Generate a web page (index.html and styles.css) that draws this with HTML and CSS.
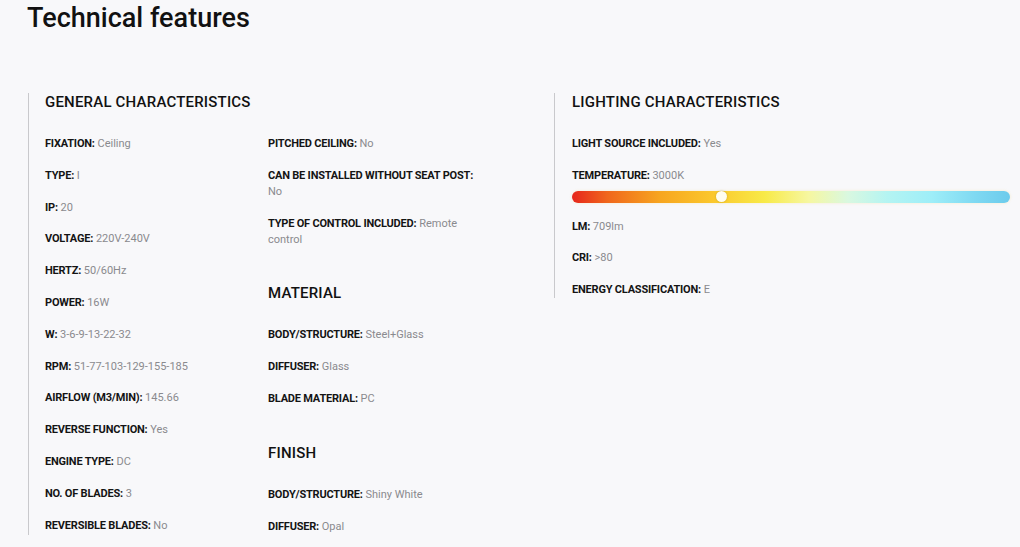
FILE: index.html
```html
<!DOCTYPE html>
<html>
<head>
<meta charset="utf-8">
<link rel="stylesheet" href="styles.css">
</head>
<body>
<div class="page">
  <h1 class="title">Technical features</h1>
  <div class="sections">
    <div class="section general">
      <div class="col">
        <h3 class="sec-title">GENERAL CHARACTERISTICS</h3>
        <div class="row"><b>FIXATION:</b> <span>Ceiling</span></div>
        <div class="row"><b>TYPE:</b> <span>I</span></div>
        <div class="row"><b>IP:</b> <span>20</span></div>
        <div class="row"><b>VOLTAGE:</b> <span>220V-240V</span></div>
        <div class="row"><b>HERTZ:</b> <span>50/60Hz</span></div>
        <div class="row"><b>POWER:</b> <span>16W</span></div>
        <div class="row"><b>W:</b> <span>3-6-9-13-22-32</span></div>
        <div class="row"><b>RPM:</b> <span>51-77-103-129-155-185</span></div>
        <div class="row"><b>AIRFLOW (M3/MIN):</b> <span>145.66</span></div>
        <div class="row"><b>REVERSE FUNCTION:</b> <span>Yes</span></div>
        <div class="row"><b>ENGINE TYPE:</b> <span>DC</span></div>
        <div class="row"><b>NO. OF BLADES:</b> <span>3</span></div>
        <div class="row"><b>REVERSIBLE BLADES:</b> <span>No</span></div>
      </div>
      <div class="col col2">
        <div class="spacer-head"></div>
        <div class="row"><b>PITCHED CEILING:</b> <span>No</span></div>
        <div class="row"><b>CAN BE INSTALLED WITHOUT SEAT POST:</b> <span>No</span></div>
        <div class="row"><b>TYPE OF CONTROL INCLUDED:</b> <span>Remote control</span></div>
        <h3 class="sec-title sub">MATERIAL</h3>
        <div class="row"><b>BODY/STRUCTURE:</b> <span>Steel+Glass</span></div>
        <div class="row"><b>DIFFUSER:</b> <span>Glass</span></div>
        <div class="row"><b>BLADE MATERIAL:</b> <span>PC</span></div>
        <h3 class="sec-title sub">FINISH</h3>
        <div class="row"><b>BODY/STRUCTURE:</b> <span>Shiny White</span></div>
        <div class="row"><b>DIFFUSER:</b> <span>Opal</span></div>
      </div>
    </div>
    <div class="section lighting">
      <div class="col wide">
        <h3 class="sec-title">LIGHTING CHARACTERISTICS</h3>
        <div class="row"><b>LIGHT SOURCE INCLUDED:</b> <span>Yes</span></div>
        <div class="row">
          <div><b>TEMPERATURE:</b> <span>3000K</span></div>
          <div class="temp-bar"><div class="thumb" style="left: 34.2%"></div></div>
        </div>
        <div class="row"><b>LM:</b> <span>709lm</span></div>
        <div class="row"><b>CRI:</b> <span>&gt;80</span></div>
        <div class="row"><b>ENERGY CLASSIFICATION:</b> <span>E</span></div>
      </div>
    </div>
  </div>
</div>
</body>
</html>
```

FILE: styles.css
```css
html, body {
  margin: 0;
  padding: 0;
  background: #f8f8fa;
}
body {
  font-family: Roboto, "Liberation Sans", Arial, sans-serif;
  color: #111;
}
.page {
  padding: 0 0 0 27px;
}
.title {
  margin: 0;
  padding-top: 3px;
  font-size: 27px;
  line-height: 30px;
  font-weight: 500;
  color: #111;
  letter-spacing: 0;
}
.sections {
  display: grid;
  grid-template-columns: 526px 1fr;
  align-items: start;
  margin-top: 60px;
  padding-left: 1px;
}
.section {
  border-left: 1px solid #c9c9cc;
  padding-left: 16px;
  display: flex;
  align-items: flex-start;
}
.section.lighting {
  padding-left: 17px;
}
.col {
  width: 223px;
  display: flex;
  flex-direction: column;
}
.col2 {
  width: 215px;
}
.col.wide {
  width: 438px;
}
.sec-title {
  margin: -1px 0 24px 0;
  font-size: 15px;
  line-height: 20px;
  font-weight: 500;
  color: #111;
  letter-spacing: 0.2px;
}
.sec-title.sub {
  margin-top: 20px;
}
.spacer-head {
  height: 43px;
}
.row {
  font-size: 11px;
  line-height: 16px;
  margin-bottom: 15.8px;
  color: #111;
}
.row:last-child {
  margin-bottom: 0;
}
.row b {
  font-weight: 700;
  color: #141414;
  letter-spacing: -0.2px;
}
.row span {
  color: #8a8a8e;
}
.temp-bar {
  position: relative;
  margin-top: 7px;
  height: 12px;
  border-radius: 6px;
  background: linear-gradient(90deg,
    #e6261c 0%,
    #f0661c 8%,
    #f7a51f 20%,
    #fbc72c 32%,
    #f8ea48 44%,
    #f6f7a0 54%,
    #d9f8e0 63%,
    #b4f4f2 72%,
    #9eeef8 82%,
    #7fd9f2 92%,
    #6ccbec 100%);
  box-shadow: 0 0 3px rgba(240, 200, 60, 0.25);
}
.thumb {
  position: absolute;
  top: 0.5px;
  width: 11px;
  height: 11px;
  margin-left: -5.5px;
  border-radius: 50%;
  background: #fffdf0;
  box-shadow: 0 0 2px rgba(150, 120, 0, 0.5);
}
```
